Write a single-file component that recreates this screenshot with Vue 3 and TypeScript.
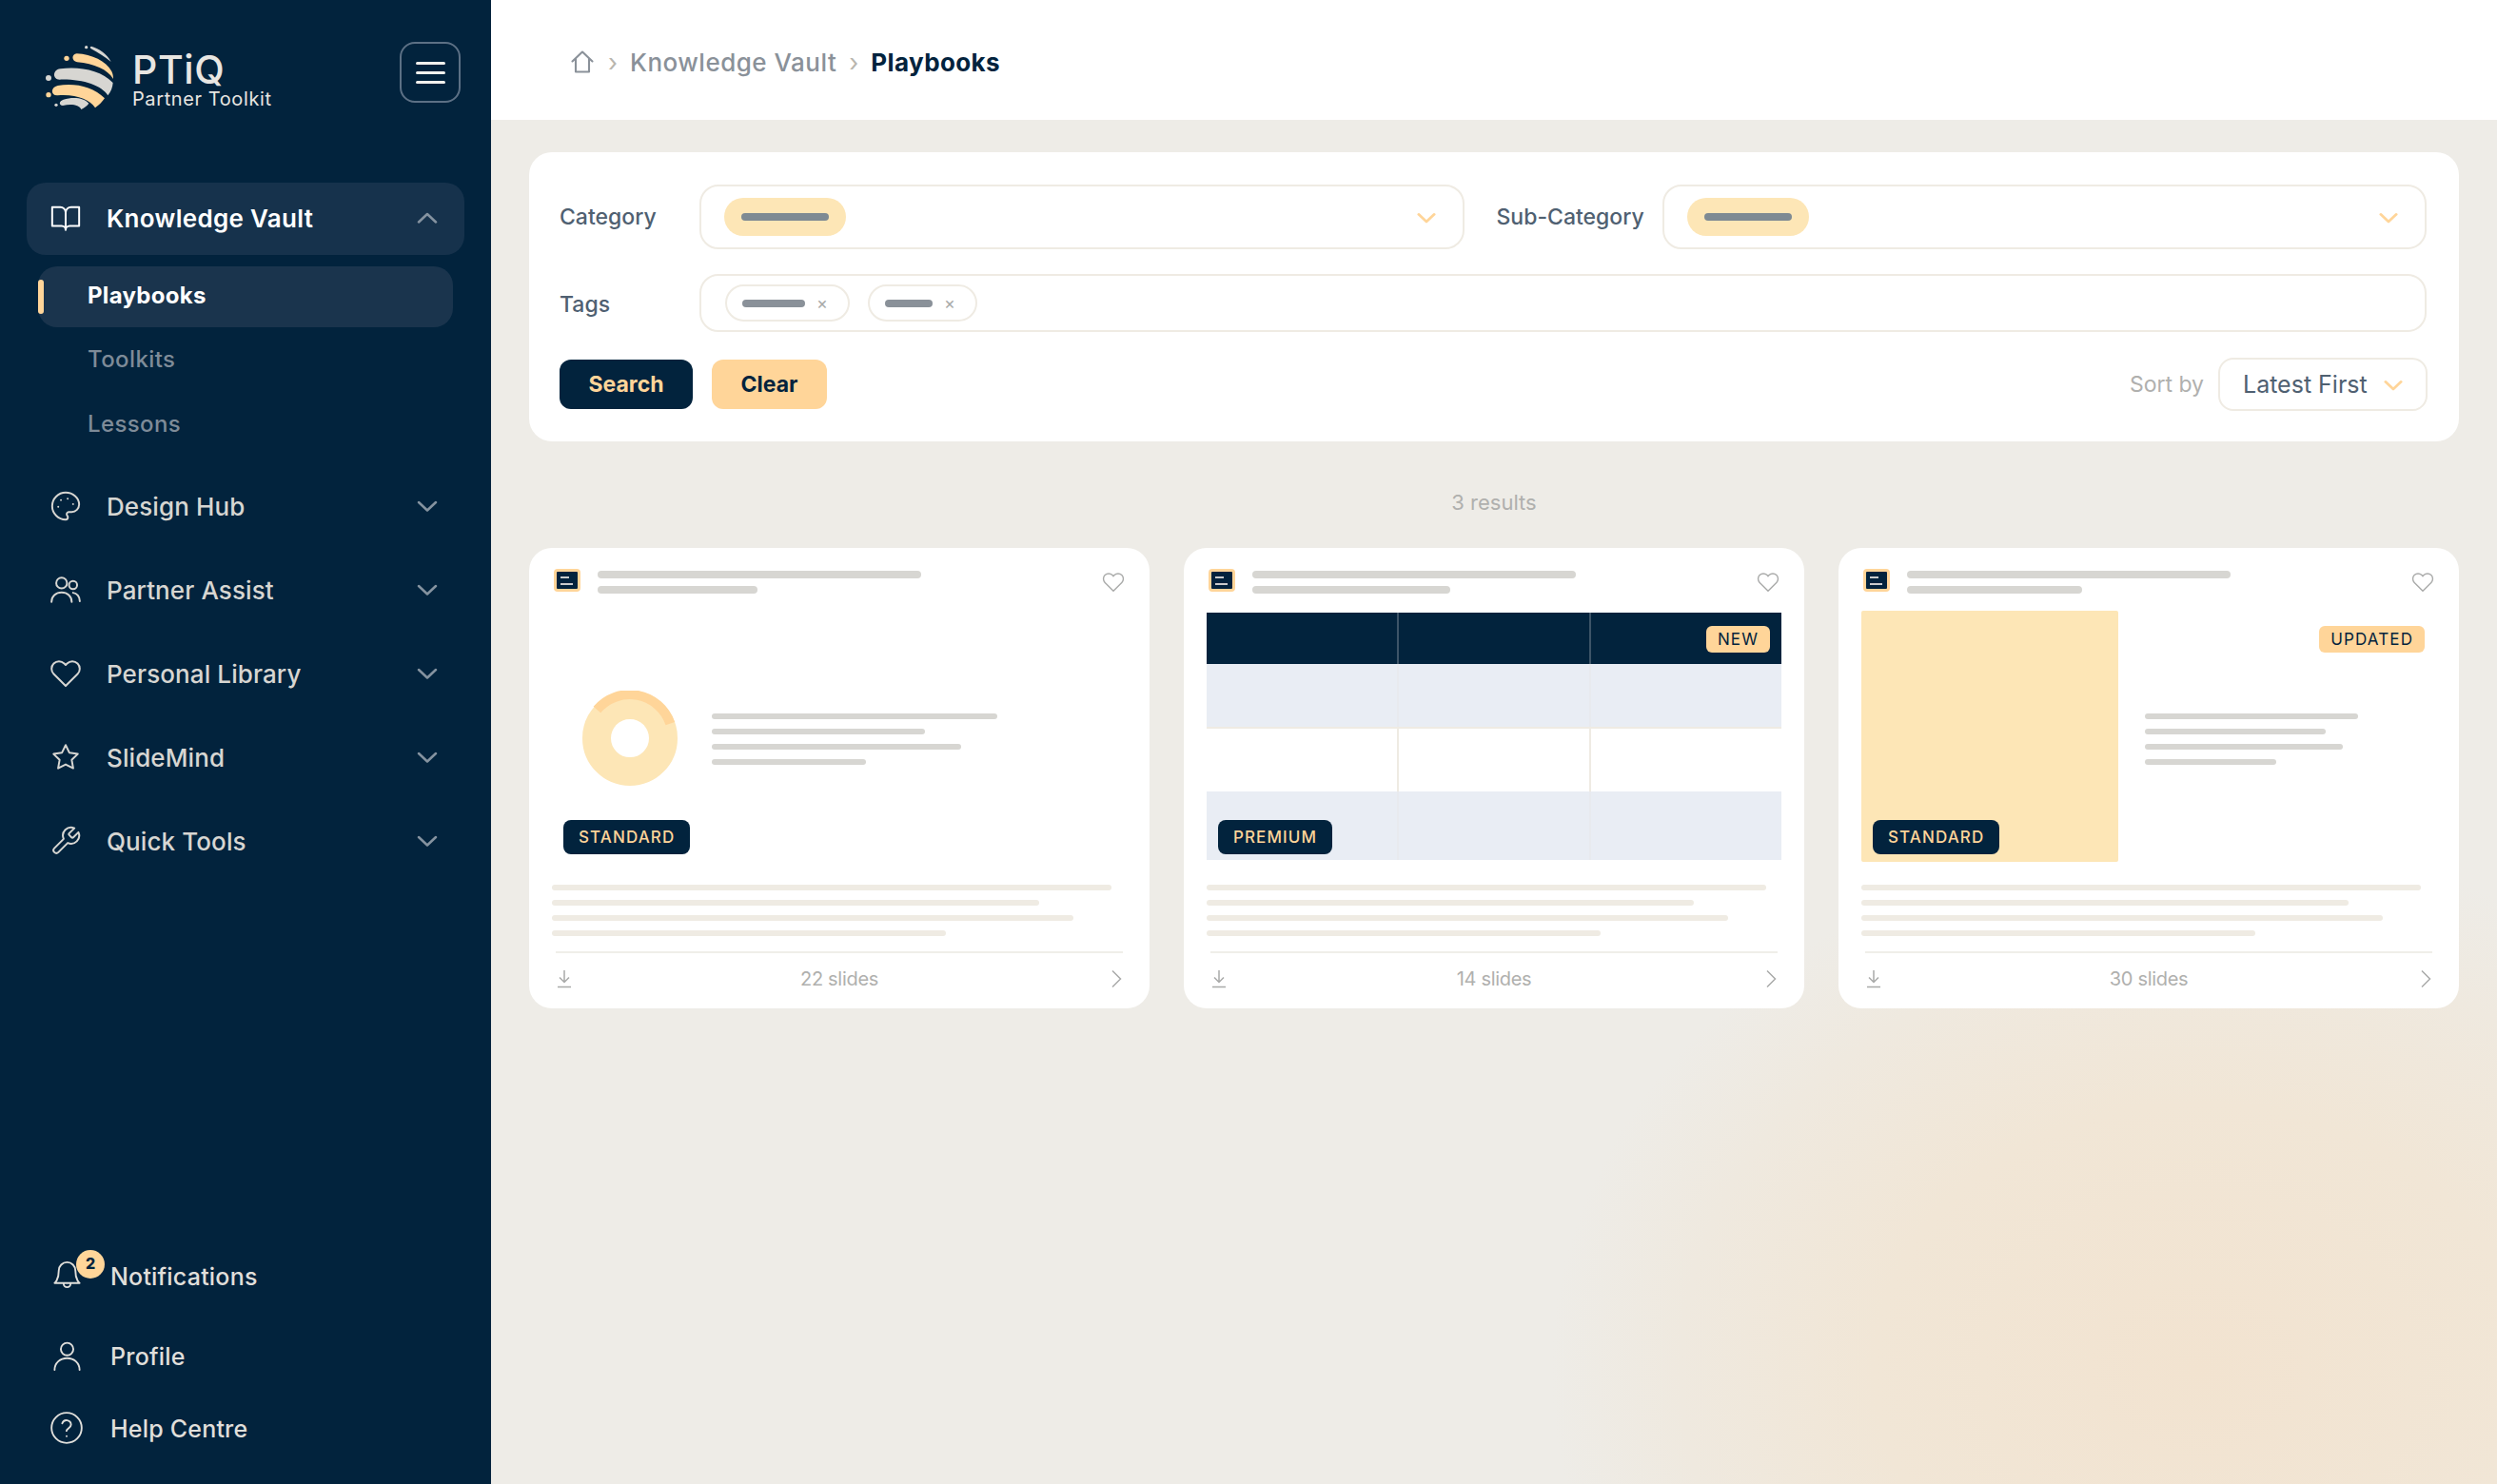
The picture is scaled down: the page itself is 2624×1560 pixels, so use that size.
<template>
  <div class="app-shell">
    <aside class="sidebar">
      <div class="brand">
        <svg class="brand-logo" viewBox="0 0 450 330">
          <path class="logo-grey" d="M228 86c22 6 50 24 62 49-18-16-42-30-60-40-6-3-8-7-2-9z" />
          <circle class="logo-grey" cx="212" cy="89" r="5" />
          <circle class="logo-gold" cx="150" cy="124" r="8" />
          <path class="logo-gold" d="M182 109c48 2 92 24 110 56 4 8 5 16 5 24-18-30-60-48-114-53-18-3-18-26-1-27z" />
          <path class="logo-grey" d="M130 157c60-8 128 4 166 44-1 14-6 28-16 40-20-32-80-52-152-50-22 0-24-30 2-34z" />
          <circle class="logo-grey" cx="93" cy="186" r="9" />
          <path class="logo-gold" d="M122 210c50-10 112 2 148 40-8 12-18 22-30 30-16-26-62-44-118-39-22 2-24-26 0-31z" />
          <circle class="logo-gold" cx="93" cy="239" r="8" />
          <path class="logo-grey" d="M140 254c30-10 66-6 80 12-6 8-14 14-24 19-6-14-30-18-58-12-14-2-12-15 2-19z" />
          <circle class="logo-grey" cx="117" cy="271" r="5" />
        </svg>
        <div class="brand-text">
          <div class="brand-name">PTiQ</div>
          <div class="brand-sub">Partner Toolkit</div>
        </div>
        <button class="menu-toggle" type="button" aria-label="Menu">
          <span></span><span></span><span></span>
        </button>
      </div>

      <nav class="nav">
        <div class="nav-item nav-item-open">
          <svg class="nav-icon" viewBox="0 0 24 24"><path :d="icons.book" /></svg>
          <span class="nav-label">Knowledge Vault</span>
          <svg class="nav-chevron" viewBox="0 0 22 12"><path d="M2 10.5 11 2l9 8.5" /></svg>
        </div>
        <div class="sub-list">
          <div v-for="sub in subItems" :key="sub" class="sub-item" :class="{ active: sub === 'Playbooks' }">{{ sub }}</div>
        </div>
        <div v-for="item in navItems" :key="item.label" class="nav-item">
          <svg class="nav-icon" viewBox="0 0 24 24"><path :d="item.icon" /></svg>
          <span class="nav-label">{{ item.label }}</span>
          <svg class="nav-chevron" viewBox="0 0 22 12"><path d="M2 2l9 8.5L20 2" /></svg>
        </div>
      </nav>

      <div class="side-foot">
        <div class="foot-item foot-notify">
          <span class="foot-icon-wrap">
            <svg class="foot-icon foot-icon-bell" viewBox="0 0 24 24"><path :d="icons.bell" /></svg>
            <span class="notify-badge">2</span>
          </span>
          <span>Notifications</span>
        </div>
        <div class="foot-item foot-profile">
          <span class="foot-icon-wrap">
            <svg class="foot-icon foot-icon-bell" viewBox="0 0 24 24"><path :d="icons.user" /></svg>
          </span>
          <span>Profile</span>
        </div>
        <div class="foot-item foot-help">
          <span class="foot-icon-wrap">
            <svg class="foot-icon foot-icon-help" viewBox="0 0 24 24"><path :d="icons.help" /></svg>
          </span>
          <span>Help Centre</span>
        </div>
      </div>
    </aside>

    <div class="main">
      <header class="topbar">
        <svg class="home-icon" viewBox="0 0 24 24"><path :d="icons.home" /></svg>
        <span class="crumb-sep">›</span>
        <span class="crumb">Knowledge Vault</span>
        <span class="crumb-sep">›</span>
        <span class="crumb crumb-current">Playbooks</span>
      </header>

      <div class="content">
        <section class="filters">
          <div class="filter-row">
            <label class="filter-label">Category</label>
            <div class="select-box">
              <span class="pill"><i></i></span>
              <svg class="gold-chevron" viewBox="0 0 22 12"><path d="M2 2l9 8.5L20 2" /></svg>
            </div>
            <label class="filter-label filter-label-sub">Sub-Category</label>
            <div class="select-box">
              <span class="pill"><i></i></span>
              <svg class="gold-chevron" viewBox="0 0 22 12"><path d="M2 2l9 8.5L20 2" /></svg>
            </div>
          </div>
          <div class="filter-row tags-row">
            <label class="filter-label">Tags</label>
            <div class="tags-box">
              <span v-for="w in tagWidths" :key="w" class="tag">
                <i :style="{ width: w + 'px' }"></i>
                <span class="tag-x">×</span>
              </span>
            </div>
          </div>
          <div class="actions">
            <button class="btn btn-search" type="button">Search</button>
            <button class="btn btn-clear" type="button">Clear</button>
            <span class="sort-label">Sort by</span>
            <div class="sort-box">
              <span>Latest First</span>
              <svg class="gold-chevron" viewBox="0 0 22 12"><path d="M2 2l9 8.5L20 2" /></svg>
            </div>
          </div>
        </section>

        <div class="results">3 results</div>

        <section class="cards">
          <article v-for="card in cards" :key="card.slides" class="card">
            <div class="card-head">
              <span class="doc-icon"><b></b><b></b></span>
              <div class="head-lines">
                <i class="head-line" style="width: 340px"></i>
                <i class="head-line" :style="{ width: card.subWidth + 'px' }"></i>
              </div>
              <svg class="heart" viewBox="0 0 24 24"><path :d="icons.heart" /></svg>
            </div>

            <div class="preview" :class="'preview-' + card.kind">
              <template v-if="card.kind === 'donut'">
                <svg class="donut" viewBox="0 0 100 100">
                  <circle cx="50" cy="50" r="35" />
                  <path d="M15.4 20a45 45 0 0 1 76.9 14.6" />
                </svg>
                <div class="preview-lines">
                  <i v-for="w in [300, 224, 262, 162]" :key="w" :style="{ width: w + 'px' }"></i>
                </div>
              </template>

              <div v-else-if="card.kind === 'table'" class="table">
                <div v-for="row in ['head', 'tint', 'plain', 'tint last']" :key="row" class="table-row" :class="row">
                  <span></span><span></span><span></span>
                </div>
              </div>

              <template v-else>
                <div class="split-block"></div>
                <div class="preview-lines">
                  <i v-for="w in [224, 190, 208, 138]" :key="w" :style="{ width: w + 'px' }"></i>
                </div>
              </template>

              <span class="tier">{{ card.tier }}</span>
              <span v-if="card.flag" class="flag">{{ card.flag }}</span>
            </div>

            <div class="desc-lines">
              <i v-for="w in [588, 512, 548, 414]" :key="w" :style="{ width: w + 'px' }"></i>
            </div>

            <div class="card-foot">
              <svg class="foot-svg" viewBox="0 0 16 20"><path d="M8 1v12M3 8.5 8 13.500l5-5M1 18.500h14" /></svg>
              <span class="slides">{{ card.slides }} slides</span>
              <svg class="foot-svg" viewBox="0 0 12 20"><path d="M2 1.500 10.500 10 2 18.500" /></svg>
            </div>
          </article>
        </section>
      </div>
    </div>
  </div>
</template>

<script setup lang="ts">
const icons = {
  book: 'M2 4h6a4 4 0 0 1 4 4v13a3 3 0 0 0-3-3H2zM22 4h-6a4 4 0 0 0-4 4v13a3 3 0 0 1 3-3h7z',
  palette:
    'M12 2C6.5 2 2 6.5 2 12s4.5 10 10 10c.93 0 1.65-.75 1.65-1.69 0-.44-.18-.83-.44-1.12-.29-.29-.44-.65-.44-1.13a1.64 1.64 0 0 1 1.67-1.67h2c3.05 0 5.55-2.5 5.55-5.55C21.97 6.01 17.46 2 12 2zM13.5 6.5h.01M17.5 10.5h.01M8.5 7.5h.01M6.5 12.5h.01',
  users:
    'M5 7a4 4 0 1 0 8 0 4 4 0 1 0-8 0zM14.5 8.5a3 3 0 1 0 6 0 3 3 0 1 0-6 0zM1.5 21c0-4.2 3.3-7 7.5-7s7.5 2.8 7.5 7M17.5 14.2c2.8.3 5 3 5 6.3',
  heart:
    'M20.84 4.61a5.5 5.5 0 0 0-7.78 0L12 5.67l-1.06-1.06a5.5 5.5 0 0 0-7.78 7.78l1.06 1.06L12 21.23l7.78-7.78 1.06-1.06a5.5 5.5 0 0 0 0-7.78z',
  star: 'M12 3l2.8 5.7 6.2.9-4.5 4.4 1.1 6.2L12 17.3l-5.6 2.9 1.1-6.2L3 9.6l6.2-.9z',
  wrench:
    'M14.7 6.3a1 1 0 0 0 0 1.4l1.6 1.6a1 1 0 0 0 1.4 0l3.77-3.77a6 6 0 0 1-7.94 7.94l-6.91 6.91a2.12 2.12 0 0 1-3-3l6.91-6.91a6 6 0 0 1 7.94-7.94l-3.76 3.76z',
  bell: 'M18 8A6 6 0 0 0 6 8c0 7-3 9-3 9h18s-3-2-3-9M14.5 17.5a2.5 2.5 0 0 1-5 0',
  user: 'M7.5 7a4.5 4.5 0 1 0 9 0 4.5 4.5 0 1 0-9 0zM3 22c0-5 4-8.500 9-8.500s9 3.500 9 8.500',
  help: 'M2 12a10 10 0 1 0 20 0 10 10 0 1 0-20 0zM9.090 9a3 3 0 0 1 5.830 1c0 2-3 2.500-3 4M12 17.500h.01',
  home: 'M3 11.500 12 3l9 8.500M6 9v12h12V9',
}

const subItems = ['Playbooks', 'Toolkits', 'Lessons']

const navItems = [
  { label: 'Design Hub', icon: icons.palette },
  { label: 'Partner Assist', icon: icons.users },
  { label: 'Personal Library', icon: icons.heart },
  { label: 'SlideMind', icon: icons.star },
  { label: 'Quick Tools', icon: icons.wrench },
]

const tagWidths = [66, 50]

const cards = [
  { kind: 'donut', subWidth: 168, tier: 'STANDARD', flag: '', slides: 22 },
  { kind: 'table', subWidth: 208, tier: 'PREMIUM', flag: 'NEW', slides: 14 },
  { kind: 'split', subWidth: 184, tier: 'STANDARD', flag: 'UPDATED', slides: 30 },
]
</script>

<style>
html,
body {
  margin: 0;
  padding: 0;
  background: #eeece7;
}
</style>

<style scoped>
* {
  box-sizing: border-box;
}

.app-shell {
  display: flex;
  width: 2624px;
  height: 1560px;
  overflow: hidden;
  font-family: Inter, "Noto Sans", sans-serif;
  color: #02233d;
}

/* sidebar */
.sidebar {
  width: 516px;
  flex: none;
  display: flex;
  flex-direction: column;
  background: #02233d;
}

.brand {
  display: flex;
  align-items: flex-start;
  height: 192px;
  padding: 20px 32px 0 20px;
}

.brand-logo {
  width: 150px;
  height: 110px;
  flex: none;
  margin-right: -30px;
}

.logo-gold {
  fill: #ffd599;
}

.logo-grey {
  fill: #d7d6d2;
}

.brand-text {
  padding-top: 32px;
  margin-left: -1px;
  color: #e8e6e2;
}

.brand-name {
  font-size: 41px;
  line-height: 42px;
  font-weight: 500;
  letter-spacing: 0.6px;
}

.brand-sub {
  font-size: 20px;
  line-height: 20px;
  letter-spacing: 0.6px;
}

.menu-toggle {
  display: flex;
  flex-direction: column;
  justify-content: center;
  align-items: center;
  gap: 7px;
  width: 64px;
  height: 64px;
  margin-left: auto;
  margin-top: 24px;
  background: transparent;
  border: 2px solid #5c7085;
  border-radius: 16px;
}

.menu-toggle span {
  width: 31px;
  height: 3px;
  background: #f2f1ee;
  border-radius: 2px;
}

.nav-item {
  display: flex;
  align-items: center;
  height: 88px;
  margin: 0 28px;
  padding: 0 28px 2px 24px;
  color: #d7d6d2;
  font-size: 26px;
  font-weight: 500;
}

.nav-item-open {
  height: 76px;
  background: #16324c;
  border-radius: 20px;
  color: #fff;
  font-weight: 600;
}

.nav-icon {
  width: 34px;
  height: 34px;
  flex: none;
  fill: none;
  stroke: currentColor;
  stroke-width: 1.400;
  stroke-linecap: round;
  stroke-linejoin: round;
}

.nav-label {
  margin-left: 26px;
  letter-spacing: 0.1px;
}

.nav-item-open .nav-label {
  letter-spacing: 0.3px;
}

.nav-chevron {
  width: 22px;
  height: 12px;
  margin-left: auto;
  fill: none;
  stroke: #8593a0;
  stroke-width: 2.500;
  stroke-linecap: round;
  stroke-linejoin: round;
}

.sub-list {
  padding: 12px 40px 0;
  margin-bottom: 9px;
}

.sub-item {
  display: flex;
  align-items: center;
  height: 68px;
  padding-left: 52px;
  padding-bottom: 2px;
  font-size: 24px;
  font-weight: 500;
  letter-spacing: 0.4px;
  color: #7e8b98;
}

.sub-item.active {
  position: relative;
  height: 64px;
  padding-bottom: 3px;
  background: #1a344d;
  border-radius: 20px;
  color: #fff;
  font-weight: 700;
  letter-spacing: 0.3px;
}

.sub-item.active::before {
  content: "";
  position: absolute;
  left: 0;
  top: 14px;
  width: 6px;
  height: 36px;
  background: #ffd599;
  border-radius: 3px;
}

.side-foot {
  margin-top: auto;
  padding: 0 0 30px 54px;
  color: #e0dfdb;
  font-size: 25px;
  font-weight: 500;
  letter-spacing: 0.2px;
}

.foot-item {
  display: flex;
  align-items: center;
  height: 56px;
}

.foot-profile {
  margin-top: 28px;
}

.foot-help {
  margin-top: 20px;
}

.foot-icon-wrap {
  position: relative;
  display: block;
  width: 62px;
  flex: none;
}

.foot-icon {
  display: block;
  fill: none;
  stroke: currentColor;
  stroke-linecap: round;
  stroke-linejoin: round;
}

.foot-icon-bell {
  width: 35px;
  height: 35px;
  margin-left: -1px;
  margin-top: -2px;
  stroke-width: 1.300;
}

.foot-icon-help {
  width: 38px;
  height: 38px;
  margin-left: -3px;
  margin-top: -2px;
  stroke-width: 1.200;
}

.notify-badge {
  position: absolute;
  left: 26px;
  top: -12px;
  width: 30px;
  height: 30px;
  border-radius: 50%;
  background: #ffd599;
  color: #02233d;
  font-size: 16px;
  font-weight: 800;
  line-height: 29px;
  letter-spacing: 0;
  text-align: center;
}

/* main area */
.main {
  flex: 1;
  min-width: 0;
  display: flex;
  flex-direction: column;
  background:
    radial-gradient(ellipse 680px 560px at 1794px 1440px, #f2e3d0 0%, #f1e6d6 50%, #efe9df 80%, #eeece7 100%),
    #eeece7;
}

.topbar {
  display: flex;
  align-items: center;
  height: 126px;
  flex: none;
  padding: 4px 0 0 82px;
  background: #fff;
  font-size: 26px;
}

.home-icon {
  width: 28px;
  height: 28px;
  margin-top: 0;
  fill: none;
  stroke: #8a9199;
  stroke-width: 1.800;
  stroke-linecap: round;
  stroke-linejoin: round;
}

.crumb-sep {
  margin: 0 13px;
  color: #b9b6ae;
  font-size: 26px;
}

.crumb {
  color: #8a9199;
  font-weight: 500;
  letter-spacing: 0.5px;
}

.crumb-current {
  color: #02233d;
  font-weight: 700;
  letter-spacing: 0.4px;
}

.content {
  padding: 34px 40px 0;
}

.filters {
  height: 304px;
  padding: 34px 34px 0 32px;
  background: #fff;
  border-radius: 24px;
}

.filter-row {
  display: flex;
  align-items: center;
}

.filter-label {
  width: 147px;
  flex: none;
  font-size: 23px;
  font-weight: 500;
  color: #4f6071;
}

.filter-label-sub {
  width: 174px;
  margin-left: 34px;
}

.select-box {
  flex: 1;
  display: flex;
  align-items: center;
  justify-content: space-between;
  height: 68px;
  padding: 0 28px 0 24px;
  border: 2px solid #efebe3;
  border-radius: 20px;
}

.pill {
  display: flex;
  align-items: center;
  justify-content: center;
  width: 128px;
  height: 40px;
  background: #fde6b6;
  border-radius: 20px;
}

.pill i {
  display: block;
  width: 92px;
  height: 8px;
  background: #7e8a93;
  border-radius: 4px;
}

.gold-chevron {
  width: 20px;
  height: 12px;
  margin-top: 2px;
  fill: none;
  stroke: #ffd599;
  stroke-width: 3;
  stroke-linecap: round;
  stroke-linejoin: round;
}

.tags-row {
  margin-top: 26px;
}

.tags-row .filter-label {
  padding-top: 2px;
}

.tags-box {
  flex: 1;
  display: flex;
  align-items: center;
  gap: 19px;
  height: 61px;
  padding-left: 25px;
  border: 2px solid #efebe3;
  border-radius: 20px;
}

.tag {
  display: flex;
  align-items: center;
  height: 39px;
  padding: 0 21px 0 16px;
  border: 2px solid #efebe3;
  border-radius: 20px;
}

.tag i {
  display: block;
  height: 8px;
  background: #8a9199;
  border-radius: 4px;
}

.tag-x {
  margin-left: 12px;
  color: #a9aaa9;
  font-size: 18px;
  line-height: 18px;
}

.actions {
  display: flex;
  align-items: center;
  margin-top: 27px;
}

.btn {
  height: 52px;
  padding: 0;
  border: none;
  border-radius: 12px;
  font-family: inherit;
  font-size: 23px;
  font-weight: 700;
}

.btn-search {
  width: 140px;
  background: #02233d;
  color: #ffd599;
}

.btn-clear {
  width: 121px;
  margin-left: 20px;
  background: #ffd599;
  color: #02233d;
}

.sort-label {
  margin-left: auto;
  font-size: 23px;
  color: #b0b0ae;
}

.sort-box {
  display: flex;
  align-items: center;
  justify-content: space-between;
  width: 220px;
  height: 56px;
  margin-left: 15px;
  margin-right: -1px;
  padding: 0 24px;
  border: 2px solid #efebe3;
  border-radius: 16px;
  color: #4f6071;
  font-size: 25px;
  font-weight: 400;
}

.results {
  height: 34px;
  margin: 47px 0 31px;
  text-align: center;
  font-size: 22px;
  line-height: 34px;
  color: #b0b0ae;
}

/* playbook cards */
.cards {
  display: grid;
  grid-template-columns: repeat(3, 652px);
  gap: 36px;
}

.card {
  height: 484px;
  padding: 22px 24px 0;
  background: #fff;
  border-radius: 24px;
}

.card-head {
  display: flex;
  align-items: flex-start;
  height: 44px;
}

.doc-icon {
  display: flex;
  flex-direction: column;
  justify-content: center;
  gap: 5px;
  width: 28px;
  height: 24px;
  margin-left: 2px;
  padding-left: 4px;
  background: #02233d;
  border: 3px solid #ffd599;
  border-radius: 4px;
}

.doc-icon b {
  display: block;
  width: 9px;
  height: 2px;
  background: #c9cbcc;
}

.doc-icon b + b {
  width: 13px;
}

.head-lines {
  display: flex;
  flex-direction: column;
  gap: 8px;
  margin-left: 18px;
  padding-top: 2px;
}

.head-line {
  display: block;
  height: 8px;
  background: #d7d6d2;
  border-radius: 4px;
}

.heart {
  width: 24px;
  height: 24px;
  margin-left: auto;
  margin-top: 2px;
  margin-right: 2px;
  fill: none;
  stroke: #a9aaa9;
  stroke-width: 1.400;
}

.preview {
  position: relative;
  display: flex;
  align-items: center;
  height: 264px;
}

.preview-donut {
  padding-left: 32px;
}

.donut {
  width: 100px;
  height: 100px;
  flex: none;
  margin-top: 4px;
  fill: none;
}

.donut circle {
  stroke: #fde6b6;
  stroke-width: 30;
}

.donut path {
  stroke: #ffd599;
  stroke-width: 10;
}

.preview-lines {
  display: flex;
  flex-direction: column;
  gap: 10px;
  margin-left: 36px;
  margin-top: 6px;
}

.preview-lines i {
  display: block;
  height: 6px;
  background: #d7d6d2;
  border-radius: 3px;
}

.split-block {
  width: 270px;
  height: 264px;
  flex: none;
  background: #fde6b6;
  border-radius: 2px;
}

.preview-split .preview-lines {
  margin-left: 28px;
}

.table {
  width: 100%;
  display: grid;
  grid-template-rows: 54px 68px 66px 72px;
}

.table-row {
  display: grid;
  grid-template-columns: 202px 202px 200px;
}

.table-row span {
  border-right: 2px solid #efebe3;
}

.table-row span:last-child {
  border-right: none;
}

.table-row.head {
  background: #02233d;
}

.table-row.head span {
  border-right-color: #3d5468;
}

.table-row.tint {
  background: #e9edf4;
  border-bottom: 2px solid #efebe3;
}

.table-row.tint span {
  border-right-color: #e8eaee;
}

.table-row.last {
  border-bottom: none;
}

.tier {
  position: absolute;
  left: 12px;
  bottom: 8px;
  display: flex;
  align-items: center;
  height: 36px;
  padding: 0 16px;
  background: #02233d;
  color: #ffd599;
  border-radius: 8px;
  font-size: 17px;
  font-weight: 500;
  letter-spacing: 1.100px;
}

.flag {
  position: absolute;
  right: 12px;
  top: 16px;
  display: flex;
  align-items: center;
  height: 28px;
  padding: 0 12px;
  background: #ffd599;
  color: #02233d;
  border-radius: 6px;
  font-size: 17px;
  font-weight: 400;
  letter-spacing: 1.100px;
}

.desc-lines {
  display: flex;
  flex-direction: column;
  gap: 10px;
  margin-top: 24px;
}

.desc-lines i {
  display: block;
  height: 6px;
  background: #efebe3;
  border-radius: 3px;
}

.card-foot {
  display: flex;
  align-items: center;
  justify-content: space-between;
  height: 60px;
  margin: 16px 4px 0;
  padding: 0 1px 5px;
  border-top: 2px solid #efeee9;
}

.foot-svg {
  height: 20px;
  fill: none;
  stroke: #a9aaa9;
  stroke-width: 1.500;
}

.foot-svg:first-child {
  width: 16px;
}

.foot-svg:last-child {
  width: 12px;
}

.slides {
  margin-right: 4px;
  font-size: 20px;
  letter-spacing: -0.3px;
  color: #b0b0ae;
}
</style>
